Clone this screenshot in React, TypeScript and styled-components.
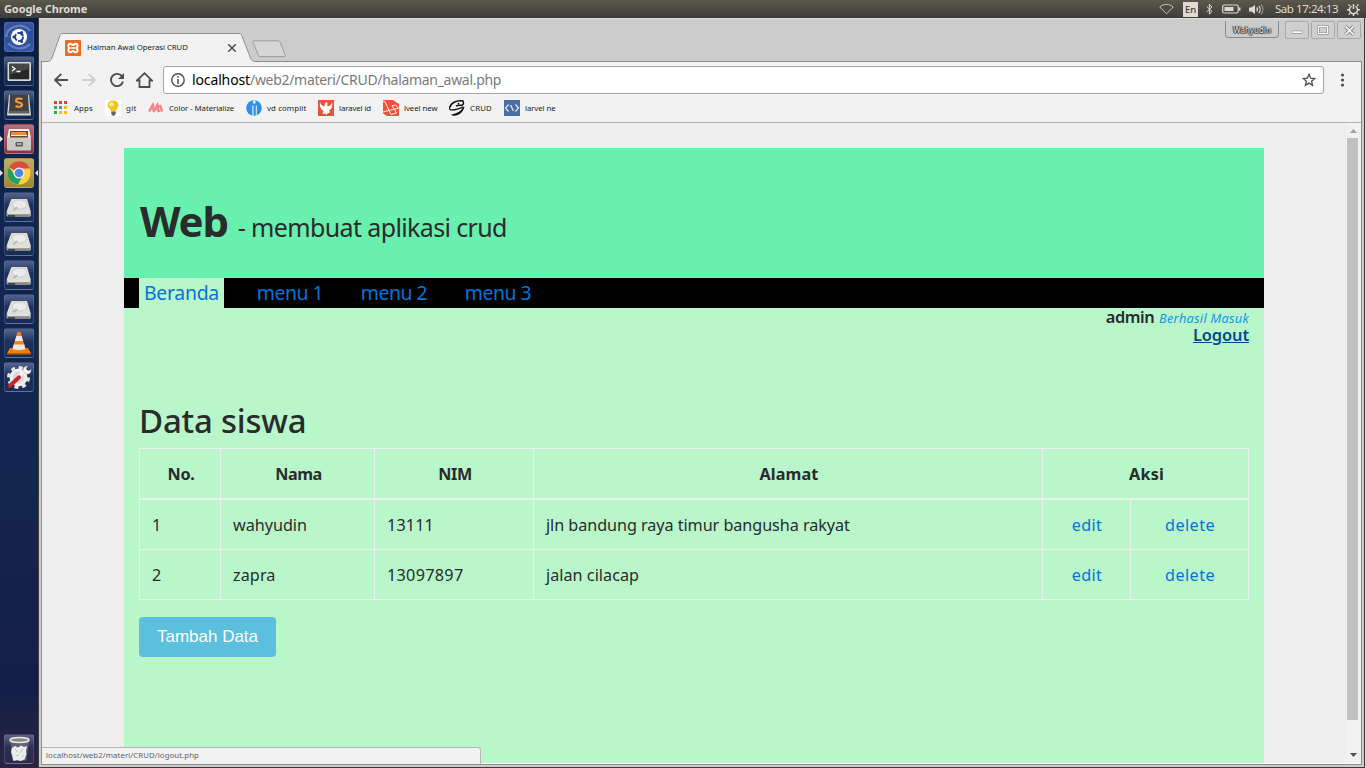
import React from "react";
import styled, { createGlobalStyle, css } from "styled-components";

const GlobalStyle = createGlobalStyle`
  * { box-sizing: border-box; }
  body { margin: 0; overflow: hidden; font-family: "Noto Sans", sans-serif; }
  svg { display: block; flex: none; }
`;

const Desktop = styled.div`
  width: 1366px;
  height: 768px;
  display: flex;
  flex-direction: column;
  overflow: hidden;
  background: #d8d8d8;
`;

/* ---------- top panel ---------- */
const Panel = styled.header`
  height: 18px;
  flex: none;
  display: flex;
  align-items: center;
  justify-content: space-between;
  padding: 0 6px 0 4px;
  background: linear-gradient(#5a574e, #3e3d38);
  color: #dfdbd2;
`;
const AppName = styled.span`
  font-size: 11px;
  line-height: 17px;
  font-weight: 700;
  letter-spacing: -0.1px;
  margin-top: -1px;
`;
const Indicators = styled.div`
  display: flex;
  align-items: center;
`;
const Lang = styled.span`
  width: 15px;
  height: 15px;
  margin: 0 8px 0 9px;
  background: #dfdbd2;
  color: #3c3b37;
  font-size: 9.5px;
  font-weight: 500;
  line-height: 15px;
  text-align: center;
`;
const Clock = styled.span`
  width: 63px;
  margin: -1px 9px 0 11px;
  font-size: 11.6px;
  line-height: 17px;
  letter-spacing: -0.5px;
  white-space: nowrap;
`;
const Gap = styled.span<{ $w: number }>`
  width: ${(p) => p.$w}px;
`;

const Workspace = styled.div`
  flex: 1;
  min-height: 0;
  display: flex;
`;

/* ---------- launcher ---------- */
const Launcher = styled.aside`
  width: 38px;
  flex: none;
  display: flex;
  flex-direction: column;
  gap: 4px;
  padding: 4px 4px 4px;
  background: linear-gradient(#0b1c40, #10254f 25%, #14264f 60%, #141f47 90%, #2b2342);
`;
const Tile = styled.div<{ $bg?: string; $last?: boolean }>`
  position: relative;
  width: 30px;
  height: 30px;
  flex: none;
  display: flex;
  align-items: center;
  justify-content: center;
  border-radius: 3px;
  border: 1px solid rgba(170, 182, 212, 0.2);
  background: ${(p) => p.$bg ?? "linear-gradient(rgba(150,165,205,.5), rgba(90,110,150,.16) 45%, rgba(60,80,120,.16))"};
  ${(p) => p.$last && css`margin-top: auto;`}
`;
const Arrow = styled.i<{ $right?: boolean }>`
  position: absolute;
  top: 11px;
  border: 3px solid transparent;
  ${(p) => (p.$right ? css`right: -5px; border-right-color: #e6e6e6; border-left: 0;` : css`left: -5px; border-left-color: #e6e6e6; border-right: 0;`)}
`;

/* ---------- browser window ---------- */
const Window = styled.section`
  width: 1327px;
  flex: none;
  display: flex;
  flex-direction: column;
  border: solid #3a3a3a;
  border-width: 0 1px 1px;
  background: #cccccc;
  box-shadow: inset 0 1px #dedede;
`;
const TabStrip = styled.div`
  height: 43px;
  flex: none;
  display: flex;
  align-items: flex-end;
  padding-left: 9px;
`;
const Tab = styled.div`
  position: relative;
  z-index: 1;
  width: 207px;
  height: 29px;
  margin-bottom: -1px;
  display: flex;
  align-items: center;
  padding-left: 17px;
`;
const TabShape = styled.svg`
  position: absolute;
  left: 0;
  top: 0;
`;
const TabTitle = styled.span`
  position: relative;
  width: 140px;
  margin: -1px 0 0 6px;
  font-size: 7.8px;
  line-height: 12px;
  letter-spacing: -0.04px;
  color: #1a1a1a;
  white-space: nowrap;
`;
const Raised = styled.svg`
  position: relative;
`;
const NewTab = styled.svg`
  margin: 0 auto 3px -4px;
`;
const WindowControls = styled.div`
  align-self: flex-start;
  display: flex;
  gap: 2px;
  padding: 3px 3px 0 0;
`;
const Profile = styled.div`
  width: 54px;
  height: 17px;
  margin-right: 4px;
  border: 1px solid #8b8b8b;
  border-top: 0;
  border-radius: 0 0 4px 4px;
  font-size: 8px;
  line-height: 18px;
  text-align: center;
  color: #e9e9e9;
  text-shadow: 0 0 1px #222, 1px 0 1px #333, -1px 0 1px #333, 0 1px 1px #333;
`;
const Control = styled.div`
  width: 24px;
  height: 18px;
  display: flex;
  align-items: center;
  justify-content: center;
  border: 1px solid #a9a9a9;
  border-radius: 2px;
  background: #cfcfcf;
`;
const Frame = styled.div`
  flex: 1;
  min-height: 0;
  margin: 0 2px 2px;
  display: flex;
  flex-direction: column;
  border: 1px solid #8c8c8c;
  background: #f2f2f2;
`;
const Toolbar = styled.div`
  height: 36px;
  flex: none;
  display: flex;
  align-items: center;
  padding: 0 13px 0 12px;
`;
const Address = styled.div`
  flex: 1;
  height: 28px;
  margin: 0 14px 0 10px;
  padding: 0 7px;
  display: flex;
  align-items: center;
  border: 1px solid #a6a6a6;
  border-radius: 3px;
  background: #fff;
`;
const Url = styled.span`
  flex: 1;
  margin-left: 7px;
  font-size: 14px;
  line-height: 20px;
  letter-spacing: -0.3px;
  color: #7a7a7a;
  white-space: nowrap;
`;
const Host = styled.span`
  color: #000;
  letter-spacing: -0.13px;
`;
const Bookmarks = styled.div`
  height: 25px;
  flex: none;
  display: flex;
  align-items: center;
  padding: 0 0 4px 11px;
  border-bottom: 1px solid #b4b4b4;
`;
const Bookmark = styled.div<{ $w: number; $ls: number; $gap?: number }>`
  width: ${(p) => p.$w}px;
  display: flex;
  align-items: center;
  gap: ${(p) => p.$gap ?? 5}px;
  font-size: 7.8px;
  line-height: 12px;
  letter-spacing: ${(p) => p.$ls}px;
  color: #1c1c1c;
  white-space: nowrap;
`;

const Viewport = styled.div`
  position: relative;
  flex: 1;
  min-height: 0;
  display: flex;
  border-bottom: 1px solid #fafafa;
  background: #eeeeee;
`;
const Page = styled.main`
  flex: 1;
  display: flex;
  justify-content: center;
  padding-top: 25px;
  overflow: hidden;
`;
const Scrollbar = styled.div`
  width: 15px;
  display: flex;
  flex-direction: column;
  align-items: center;
  justify-content: space-between;
  background: #f1f1f1;
`;
const Thumb = styled.div`
  width: 11px;
  height: 582px;
  margin: 0 2px auto 0;
  background: #c1c1c1;
`;
const Status = styled.div`
  position: absolute;
  left: 0;
  bottom: -1px;
  width: 439px;
  height: 17px;
  padding-left: 4px;
  border: 1px solid #b8b8b8;
  border-left: 0;
  border-bottom: 0;
  border-radius: 0 3px 0 0;
  background: #f2f2f2;
  color: #5f5f5f;
  font-size: 7.8px;
  line-height: 15px;
  letter-spacing: 0.08px;
`;

/* ---------- web page ---------- */
const Container = styled.div`
  width: 1140px;
  background: #b9f6ca;
  color: #292b2c;
`;
const Banner = styled.div`
  height: 130px;
  padding: 50px 16px 0;
  background: #69f0ae;
`;
const Title = styled.h1`
  margin: 0;
  font-size: 42px;
  line-height: 46px;
  letter-spacing: -1.2px;
  white-space: nowrap;
`;
const Subtitle = styled.small`
  margin-left: 10px;
  font-size: 25px;
  font-weight: 400;
  letter-spacing: -0.63px;
`;
const Nav = styled.nav`
  height: 30px;
  display: flex;
  gap: 19px;
  padding: 0 15px;
  background: #000;
`;
const NavLink = styled.a<{ $active?: boolean }>`
  width: 85px;
  margin-right: ${(p) => (p.$active ? 4.5 : 0)}px;
  text-align: center;
  font-size: 19.4px;
  line-height: 30px;
  letter-spacing: ${(p) => (p.$active ? "-0.26px" : "-0.45px")};
  color: #0275d8;
  background: ${(p) => (p.$active ? "#b9f6ca" : "none")};
`;
const Content = styled.div`
  padding: 0 15px;
`;
const Session = styled.div`
  text-align: right;
  font-size: 16.4px;
  font-weight: 570;
  line-height: 18px;
  letter-spacing: -0.45px;
`;
const SessionLine = styled.div`
  height: 18px;
`;
const Message = styled.em`
  margin-left: 1px;
  font-size: 12.8px;
  font-weight: 400;
  letter-spacing: 0.24px;
  color: #1397ee;
`;
const Logout = styled.a`
  letter-spacing: -0.08px;
  color: #014c8c;
  text-decoration: underline;
`;
const Heading = styled.h2`
  margin: 57px 0 7px;
  font-size: 33px;
  font-weight: 550;
  line-height: 40px;
  letter-spacing: -0.22px;
`;
const Table = styled.table`
  width: 1109px;
  table-layout: fixed;
  border-collapse: collapse;
  font-size: 16.2px;
  line-height: 24px;
`;
const HeadCell = styled.th<{ $ls?: number }>`
  height: 50px;
  padding: 2px 0 0 2px;
  border: 1px solid #eceeef;
  border-bottom-width: 2px;
  letter-spacing: ${(p) => p.$ls ?? 0}px;
`;
const Cell = styled.td<{ $ls?: number; $center?: boolean }>`
  height: 50px;
  padding: 0 ${(p) => (p.$center ? 0 : 12)}px;
  border: 1px solid #eceeef;
  text-align: ${(p) => (p.$center ? "center" : "left")};
  letter-spacing: ${(p) => p.$ls ?? 0}px;

  tr:first-child > & {
    height: 51px;
    padding-top: 1px;
  }
`;
const Action = styled.a<{ $ls: number }>`
  margin-left: 1px;
  color: #0275d8;
  letter-spacing: ${(p) => p.$ls}px;
`;
const AddButton = styled.button`
  display: block;
  width: 137px;
  height: 40px;
  margin-top: 17px;
  padding: 0;
  border: 0;
  border-radius: 4px;
  background: #5bc0de;
  color: #fff;
  font: 17px "Liberation Sans", Arial, sans-serif;
`;

/* ---------- launcher drawings ---------- */
const Ubuntu = () => (
  <svg width="28" height="28" viewBox="0 0 28 28">
    <path d="M2 9C8 1 20 1 25 8M3 20c6 7 16 7 22 1M1 14C2 6 8 3 14 3" fill="none" stroke="#7e9bd4" strokeWidth="2.5" opacity=".6" />
    <circle cx="14" cy="14" r="8" fill="#fff" />
    <circle cx="14" cy="14" r="4" fill="none" stroke="#24418a" strokeWidth="2" strokeDasharray="7 1.4" />
    <circle cx="8.9" cy="14" r="1.5" fill="#24418a" /><circle cx="16.7" cy="9.5" r="1.5" fill="#24418a" /><circle cx="16.7" cy="18.5" r="1.5" fill="#24418a" />
  </svg>
);
const Terminal = () => (
  <svg width="28" height="28" viewBox="0 0 28 28">
    <rect x="2.5" y="5" width="23.5" height="19" rx="1.5" fill="#d9d9d6" />
    <rect x="4.2" y="6.7" width="20" height="15.6" fill="#262827" />
    <path d="M4.2 6.7h20v5l-20 6z" fill="#454846" />
    <path d="M7 9.5l3 2.2-3 2.2M11.5 14.5h4" stroke="#fff" strokeWidth="1.3" fill="none" />
  </svg>
);
const Sublime = () => (
  <svg width="28" height="28" viewBox="0 0 28 28">
    <path d="M4 4h20l2 20.5H2z" fill="#d8d8d8" />
    <path d="M5 4h18l1 16H4z" fill="#424140" />
    <path d="M3.5 20h21v2.5h-21z" fill="#62615f" />
    <path d="M17.5 8c-3.500-1-6.500-.5-6.500 1.700s6 1.500 6 3.900-3.500 2.600-6.500 1.500" fill="none" stroke="#f79a33" strokeWidth="2.2" />
  </svg>
);
const Files = () => (
  <svg width="28" height="28" viewBox="0 0 28 28">
    <path d="M4 4h20l2 9H2z" fill="#efefed" />
    <rect x="5" y="6" width="18" height="7" fill="#6d4a2c" />
    <path d="M6 7h15l1 4H6z" fill="#f08a35" />
    <path d="M6 10.5h16" stroke="#fff0da" />
    <rect x="2" y="12.5" width="24" height="13" rx="1" fill="#c9c9c6" />
    <rect x="10.5" y="17" width="7.5" height="4.5" rx="1" fill="#5c5c5a" /><path d="M12 19h4.500" stroke="#fff" />
  </svg>
);
const Chrome = () => (
  <svg width="28" height="28" viewBox="0 0 28 28">
    <circle cx="14" cy="14" r="11.5" fill="#fdd23e" />
    <path d="M14 14L4 8.300A11.500 11.500 0 0 1 24.800 9.500H14z" fill="#dd4b3e" />
    <path d="M4 8.300A11.500 11.500 0 0 0 13 25.500l5-9.200-4-2.300-4 2.300z" fill="#1da261" />
    <circle cx="14" cy="14" r="5.5" fill="#f5f5f5" /><circle cx="14" cy="14" r="4.3" fill="#4a88ee" />
  </svg>
);
const Disk = () => (
  <svg width="28" height="28" viewBox="0 0 28 28">
    <path d="M5.5 8h17L26 19v3.500L24.500 24H3l-1.500-1.500V19z" fill="#9d9d9c" />
    <path d="M6.5 6h15.500l3.500 12.500L24 20.500H3L1.800 18.500z" fill="#dededd" />
    <ellipse cx="14.5" cy="11.5" rx="7.2" ry="4.5" fill="#ebebea" stroke="#c6c6c5" strokeWidth=".8" />
    <path d="M7 17l4.500-3.500 1.500 1.200-3.500 2.800z" fill="#b8b8b7" />
    <path d="M2.5 20.300h22.500" stroke="#f6f6f5" strokeWidth=".8" /><path d="M3 23h7" stroke="#333" strokeWidth="1.6" /><path d="M10 23h14" stroke="#7b7b7a" strokeWidth="1.2" />
  </svg>
);
const Cone = () => (
  <svg width="28" height="28" viewBox="0 0 28 28">
    <path d="M5 19h18l3 5.500H2z" fill="#ee7d10" /><path d="M2 24h24v1.500H2z" fill="#b85c08" />
    <path d="M12.500 3h3l5.500 18c-4 2.500-10 2.500-14 0z" fill="#f4861c" />
    <path d="M11.400 7h5.200l1.500 5h-8.200zM8.800 15.500h10.400l1.200 4.300c-4 1.700-9 1.700-12.900 0z" fill="#ecebe9" />
  </svg>
);
const Settings = () => (
  <svg width="28" height="28" viewBox="0 0 28 28">
    <circle cx="13.5" cy="14.5" r="10" fill="none" stroke="#e6e6e6" strokeWidth="3" strokeDasharray="4 3.85" />
    <circle cx="13.5" cy="14.5" r="7.5" fill="#d9d9d9" stroke="#f0f0f0" strokeWidth="3" />
    <path d="M10 18l10-11" stroke="#efefef" strokeWidth="3.5" />
    <path d="M18 7.500c0-3 2-4.500 4.500-4.500L21 6l2 2 3-1.500c.5 3-2 5-5 4.500z" fill="#fafafa" stroke="#999" strokeWidth=".5" />
    <path d="M5 22.800l9-8.500" stroke="#c8242b" strokeWidth="4" strokeLinecap="round" />
  </svg>
);
const Trash = () => (
  <svg width="28" height="28" viewBox="0 0 28 28">
    <path d="M5 5h19l-2.500 20c-3 1.500-11 1.500-14 0z" fill="#7c8089" opacity=".6" />
    <ellipse cx="14.5" cy="5" rx="9.5" ry="2.5" fill="#83877f" stroke="#e9e9e3" strokeWidth="1.5" />
    <path d="M7 13l3-2 3 1.500 3-2 3 1.500 3-1-1 5 .5 3-2 5.500-4 1.500-3-1-4 1-1.500-6-1-3z" fill="#ececea" />
    <path d="M10 14l3 3M18 14l-3 4M11 21l3-1M17 22l2-2" stroke="#bdbdba" />
  </svg>
);

/* ---------- bookmark drawings ---------- */
const AppsIcon = () => (
  <svg width="14" height="14" viewBox="0 0 14 14">
    {["#ea4335", "#ea4335", "#ea4335", "#34a853", "#4285f4", "#fbbc05", "#34a853", "#fbbc05", "#fbbc05"].map((c, i) => (
      <rect key={i} x={1 + (i % 3) * 5} y={Math.floor(i / 3) * 5} width="3" height="3" fill={c} />
    ))}
  </svg>
);
const Bulb = () => (
  <svg width="16" height="16" viewBox="0 0 16 16">
    <rect width="16" height="16" fill="#fff" />
    <path d="M8 .5c3.500 0 5.500 2.200 5.500 4.900 0 2.400-2.500 3.600-2.800 6.100H6.400C6 9 2.700 8 2.700 5.200 2.700 2.600 4.800.5 8 .5z" fill="#f3c41c" />
    <circle cx="6.5" cy="4.2" r="2.2" fill="#fff09a" /><path d="M6.300 11.500h4.400v2.500L9.300 15.700H7.700L6.300 14z" fill="#5f6366" />
  </svg>
);
const Materialize = () => (
  <svg width="16" height="16" viewBox="0 0 16 16">
    <path d="M1 11.500C2.800 9 3.500 6.500 5 4.500c1.200 2.500-.5 6.500.6 6.800C7 11.500 8 7 9.500 4.500c1.200 2.500-.5 6.500.6 6.800l2.200-.6M11.800 5l2.500 6.500" fill="none" stroke="#f3858b" strokeWidth="2.3" />
  </svg>
);
const VdIcon = () => (
  <svg width="16" height="16" viewBox="0 0 16 16">
    <circle cx="8" cy="8" r="7.8" fill="#2f8fec" />
    <path d="M7 .5h2.500v3H7zM6.300 5.500h1.200V16H6.300zM9.800 5.500h1V15.500h-1z" fill="#f2f2f2" />
  </svg>
);
const Phoenix = () => (
  <svg width="16" height="16" viewBox="0 0 16 16">
    <rect width="16" height="16" fill="#e4553a" />
    <path d="M2 2c.8 2.500 2 4 4.500 4.500C7 5 6 3.500 8 2.200c1.500 0 2 1 1.200 1.800.3 1 .3 1.700.3 2.500C12 6 13.500 4.500 14 2c1 4-.3 7-3 8.500 1 .5.800 2 .2 2.500l-2 .2-.7 1.800-1.500-1.500-2 .5-.5-1.500 1.200-1.500C3 10 1.200 6.500 2 2z" fill="#fff" />
  </svg>
);
const Laravel = () => (
  <svg width="16" height="16" viewBox="0 0 16 16">
    <rect width="16" height="16" fill="#f4503b" />
    <path d="M0 1.500l2 .3L6 10.500l9.500-2.300L12.500 5l-3.500.7L13.500 13l-5.500 1.500L6 10.500 0 12" fill="none" stroke="#fff" strokeWidth=".9" />
    <path d="M10 0h6v4zM0 13.500V16h4z" fill="#fff" />
  </svg>
);
const Penguin = () => (
  <svg width="16" height="16" viewBox="0 0 16 16">
    <path d="M1 7.500C1.500 3 7 .3 13.800.8c1 2.200 1 3.600-.8 4.400-2.500.3-4 0-6 .8" fill="none" stroke="#111" strokeWidth="1.5" />
    <path d="M.8 6.500C0 9 .5 9.500 2 9.800c4 .5 8-1 12.500-3" fill="none" stroke="#111" strokeWidth="1.3" />
    <path d="M15.500 6.500C14.500 12 10 15.800 5 15.800c-1.200 0-2-.6-3-1.300 4.500-.5 9-2.500 11.500-6.500z" fill="#111" />
    <circle cx="9.5" cy="3.7" r=".9" fill="#111" />
  </svg>
);
const CodeIcon = () => (
  <svg width="16" height="16" viewBox="0 0 16 16">
    <rect width="16" height="16" fill="#4a6fa5" />
    <path d="M4.500 4.500L1.500 8l3 3.500M11.500 4.500l3 3.500-3 3.500M6.500 5l3 6" fill="none" stroke="#e8eef6" strokeWidth="1.2" />
  </svg>
);

const bookmarks = [
  { label: "Apps", icon: <AppsIcon />, w: 52, ls: 0.12, gap: 7 },
  { label: "git", icon: <Bulb />, w: 43, ls: 0.4 },
  { label: "Color - Materialize", icon: <Materialize />, w: 98, ls: -0.07 },
  { label: "vd complit", icon: <VdIcon />, w: 72, ls: 0.12 },
  { label: "laravel id", icon: <Phoenix />, w: 65, ls: -0.1 },
  { label: "lveel new", icon: <Laravel />, w: 66, ls: -0.06 },
  { label: "CRUD", icon: <Penguin />, w: 55, ls: 0.2 },
  { label: "larvel ne", icon: <CodeIcon />, w: 60, ls: -0.08 },
];

const menu = ["Beranda", "menu 1", "menu 2", "menu 3"];

const students = [
  { no: 1, name: "wahyudin", nim: "13111", address: "jln bandung raya timur bangusha rakyat", ls: [-0.03, 0.14, -0.06] },
  { no: 2, name: "zapra", nim: "13097897", address: "jalan cilacap", ls: [0.08, 0.3, 0.02] },
];

export default function App() {
  return (
    <Desktop>
      <GlobalStyle />
      <Panel>
        <AppName>Google Chrome</AppName>
        <Indicators>
          <svg width="15" height="12" viewBox="0 0 15 12"><path d="M.8 4C4.500.5 10.500.5 14.200 4L7.500 10.800z" fill="none" stroke="#c9c5bc" /></svg>
          <Lang>En</Lang>
          <svg width="7" height="13" viewBox="0 0 7 13"><path d="M.7 3.500l5.300 5-2.600 2.700V1.300L6 4 .7 9" fill="none" stroke="#dfdbd2" /></svg>
          <Gap $w={9} />
          <svg width="19" height="10" viewBox="0 0 19 10"><rect x=".7" y="1" width="15.5" height="8" rx="1.5" fill="none" stroke="#dfdbd2" strokeWidth="1.2" /><path d="M2.500 3h9v4h-9zM17 3.500h1.500v3H17z" fill="#dfdbd2" /></svg>
          <Gap $w={8} />
          <svg width="15" height="13" viewBox="0 0 15 13"><path d="M0 4.500h2.500L6 2v9L2.500 8.500H0z" fill="#dfdbd2" /><path d="M7.700 4.500c1 1.200 1 2.800 0 4M9.800 3c1.800 2 1.800 5 0 7" fill="none" stroke="#dfdbd2" strokeWidth="1.2" /><path d="M12 1.500c2.500 3 2.500 7 0 10" fill="none" stroke="#8d8a82" strokeWidth="1.2" /></svg>
          <Clock>Sab 17:24:13</Clock>
          <svg width="13" height="13" viewBox="0 0 13 13"><path d="M4.500 3.200a4 4 0 1 0 4 0M6.500 1v5" fill="none" stroke="#dfdbd2" strokeWidth="1.5" /><path d="M2.800 2.800L1.500 1.500M10.200 2.800l1.300-1.300M2 6.800H0M11 6.800h2M3 10.300l-1.300 1.200M10 10.300l1.300 1.200M6.500 11v2" stroke="#dfdbd2" strokeWidth="1.4" /></svg>
        </Indicators>
      </Panel>

      <Workspace>
        <Launcher>
          <Tile $bg="radial-gradient(#4467b0, #2b4c9b 60%, #3f5da6)"><Ubuntu /></Tile>
          <Tile><Terminal /></Tile>
          <Tile><Sublime /></Tile>
          <Tile $bg="linear-gradient(#b76c7c, #93303f)"><Arrow /><Files /></Tile>
          <Tile $bg="linear-gradient(#c0af66, #9e8730)"><Arrow /><Chrome /><Arrow $right /></Tile>
          <Tile><Disk /></Tile>
          <Tile><Disk /></Tile>
          <Tile><Disk /></Tile>
          <Tile><Disk /></Tile>
          <Tile><Cone /></Tile>
          <Tile><Settings /></Tile>
          <Tile $last><Trash /></Tile>
        </Launcher>

        <Window>
          <TabStrip>
            <Tab>
              <TabShape width="207" height="29" viewBox="0 0 207 29">
                <path d="M0 28.500C2.500 28 3 27 4 25L12 2.500C12.700.8 13 .5 15 .5H191c1.600 0 2 .3 2.700 2L202.500 25c.8 2 1.500 3 4.500 3.500V29H0z" fill="#f2f2f2" />
                <path d="M0 28.500C2.500 28 3 27 4 25L12 2.500C12.700.8 13 .5 15 .5H191c1.600 0 2 .3 2.700 2L202.500 25c.8 2 1.500 3 4.500 3.500" fill="none" stroke="#929292" />
              </TabShape>
              <Raised width="16" height="16" viewBox="0 0 16 16">
                <rect width="16" height="16" rx="1" fill="#ea6c1e" />
                <path d="M5.200 3.700c1.300 0 1.600 1.300 2.800 1.300s1.500-1.300 2.800-1.300c2.300 0 2.400 2.700.7 4.300 1.700 1.600 1.600 4.300-.7 4.300-1.300 0-1.600-1.300-2.800-1.300s-1.500 1.300-2.800 1.300c-2.300 0-2.400-2.700-.7-4.300-1.700-1.600-1.600-4.300.7-4.300z" fill="none" stroke="#fff" strokeWidth="2" />
                <path d="M6 8h4" stroke="#fff" strokeWidth="1.6" />
              </Raised>
              <TabTitle>Halman Awal Operasi CRUD</TabTitle>
              <Raised width="10" height="10" viewBox="0 0 10 10"><path d="M1.300 1.300l7.400 7.400M8.700 1.300L1.300 8.700" stroke="#505050" strokeWidth="1.6" /></Raised>
            </Tab>
            <NewTab width="36" height="18" viewBox="0 0 36 18"><path d="M3 .8h24c1.200 0 1.700.3 2.200 1.500l4.800 12c.6 1.600.2 2.400-1 2.400H10c-1.500 0-2-.4-2.600-1.700L2 2.500C1.500 1.300 1.900.8 3 .8z" fill="#d6d6d6" stroke="#9b9b9b" /></NewTab>
            <WindowControls>
              <Profile>Wahyudin</Profile>
              <Control><svg width="12" height="12" viewBox="0 0 12 12"><rect x=".8" y="6.8" width="10.4" height="2.7" rx="1" fill="#fff" stroke="#8b8b8b" strokeWidth=".8" /></svg></Control>
              <Control><svg width="12" height="10" viewBox="0 0 12 10"><rect x="1.3" y="1.3" width="9.4" height="7.4" rx="1" fill="none" stroke="#888" strokeWidth="2.6" /><rect x="1.3" y="1.3" width="9.4" height="7.4" rx="1" fill="none" stroke="#fff" strokeWidth="1.3" /></svg></Control>
              <Control><svg width="11" height="11" viewBox="0 0 11 11"><path d="M1.500 1.500l8 8M9.500 1.500l-8 8" stroke="#858585" strokeWidth="3.4" /><path d="M1.500 1.500l8 8M9.500 1.500l-8 8" stroke="#fff" strokeWidth="1.7" /></svg></Control>
            </WindowControls>
          </TabStrip>

          <Frame>
            <Toolbar>
              <svg width="14" height="14" viewBox="0 0 14 14"><path d="M14 7H1.500M7.300.8L1.200 7l6.100 6.200" fill="none" stroke="#4f4f4f" strokeWidth="1.9" /></svg>
              <Gap $w={14} />
              <svg width="14" height="14" viewBox="0 0 14 14"><path d="M0 7h12.500M6.700.8L12.800 7l-6.100 6.200" fill="none" stroke="#cfcfcf" strokeWidth="1.9" /></svg>
              <Gap $w={13} />
              <svg width="16" height="16" viewBox="0 0 16 16"><path d="M13.300 4.800A6.100 6.100 0 1 0 14 9.500" fill="none" stroke="#4f4f4f" strokeWidth="1.9" /><path d="M15 1v6H9z" fill="#4f4f4f" /></svg>
              <Gap $w={11} />
              <svg width="17" height="16" viewBox="0 0 17 16"><path d="M1 8.500L8.500 1.200 16 8.500h-2.500V15h-10V8.500z" fill="none" stroke="#4f4f4f" strokeWidth="1.8" /></svg>
              <Address>
                <svg width="14" height="14" viewBox="0 0 14 14"><circle cx="7" cy="7" r="6.2" fill="none" stroke="#4f4f4f" strokeWidth="1.4" /><path d="M7 3.200v1.600M7 6v5" stroke="#4f4f4f" strokeWidth="1.6" /></svg>
                <Url><Host>localhost</Host>/web2/materi/CRUD/halaman_awal.php</Url>
                <svg width="14" height="14" viewBox="0 0 14 14"><path d="M7 1.300l1.600 3.900 4.200.3-3.200 2.700 1 4.200L7 10.100l-3.600 2.300 1-4.200L1.200 5.500l4.200-.3z" fill="none" stroke="#4f4f4f" strokeWidth="1.3" /></svg>
              </Address>
              <svg width="10" height="14" viewBox="0 0 10 14"><g fill="#4f4f4f"><circle cx="4.5" cy="2" r="1.6" /><circle cx="4.5" cy="7" r="1.6" /><circle cx="4.5" cy="12" r="1.6" /></g></svg>
            </Toolbar>
            <Bookmarks>
              {bookmarks.map((b) => (
                <Bookmark key={b.label} $w={b.w} $ls={b.ls} $gap={b.gap}>{b.icon}{b.label}</Bookmark>
              ))}
            </Bookmarks>

            <Viewport>
              <Page>
                <Container>
                  <Banner>
                    <Title>Web<Subtitle>- membuat aplikasi crud</Subtitle></Title>
                  </Banner>
                  <Nav>
                    {menu.map((m, i) => <NavLink key={m} $active={i === 0}>{m}</NavLink>)}
                  </Nav>
                  <Content>
                    <Session>
                      <SessionLine>admin <Message>Berhasil Masuk</Message></SessionLine>
                      <SessionLine><Logout>Logout</Logout></SessionLine>
                    </Session>
                    <Heading>Data siswa</Heading>
                    <Table>
                      <colgroup>
                        <col width="81" /><col width="154" /><col width="159" /><col width="509" /><col width="88" /><col width="118" />
                      </colgroup>
                      <thead>
                        <tr>
                          <HeadCell $ls={-0.28}>No.</HeadCell>
                          <HeadCell $ls={-0.5}>Nama</HeadCell>
                          <HeadCell $ls={-0.4}>NIM</HeadCell>
                          <HeadCell $ls={0.13}>Alamat</HeadCell>
                          <HeadCell $ls={0.15} colSpan={2}>Aksi</HeadCell>
                        </tr>
                      </thead>
                      <tbody>
                        {students.map((s) => (
                          <tr key={s.no}>
                            <Cell>{s.no}</Cell>
                            <Cell $ls={s.ls[0]}>{s.name}</Cell>
                            <Cell $ls={s.ls[1]}>{s.nim}</Cell>
                            <Cell $ls={s.ls[2]}>{s.address}</Cell>
                            <Cell $center><Action $ls={0.35}>edit</Action></Cell>
                            <Cell $center><Action $ls={0.44}>delete</Action></Cell>
                          </tr>
                        ))}
                      </tbody>
                    </Table>
                    <AddButton>Tambah Data</AddButton>
                  </Content>
                </Container>
              </Page>
              <Scrollbar>
                <svg width="15" height="15" viewBox="0 0 15 15"><path d="M4 10l3.500-4 3.500 4z" fill="#a0a0a0" /></svg>
                <Thumb />
                <svg width="15" height="15" viewBox="0 0 15 15"><path d="M4 5h7L7.500 9z" fill="#505050" /></svg>
              </Scrollbar>
              <Status>localhost/web2/materi/CRUD/logout.php</Status>
            </Viewport>
          </Frame>
        </Window>
      </Workspace>
    </Desktop>
  );
}
